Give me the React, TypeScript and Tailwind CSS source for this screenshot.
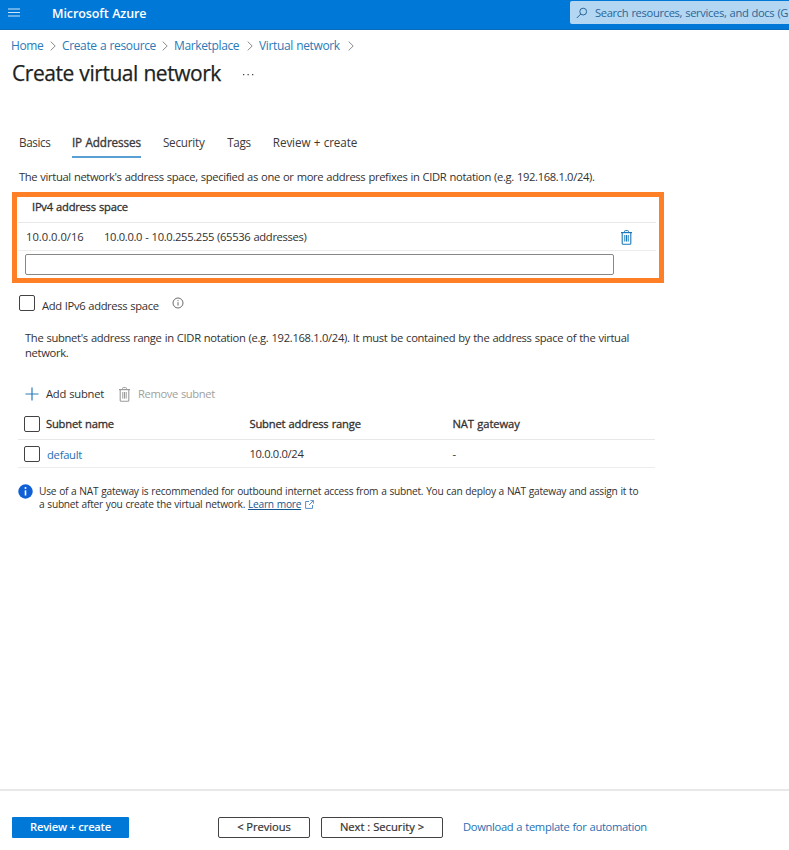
import React from 'react';
import clsx from 'clsx';

const breadcrumbs = [
  { label: 'Home', width: 'w-[51px]' },
  { label: 'Create a resource', width: 'w-[112px]' },
  { label: 'Marketplace', width: 'w-[85px]' },
  { label: 'Virtual network', width: 'w-[101px]' },
];

const tabs = [
  { label: 'Basics', margin: 'ml-[19px]', tracking: 'tracking-[-0.38px]' },
  { label: 'IP Addresses', margin: 'ml-[21.5px]', tracking: 'tracking-[-0.1px]' },
  { label: 'Security', margin: 'ml-[22px]', tracking: 'tracking-[-0.22px]' },
  { label: 'Tags', margin: 'ml-[22.5px]', tracking: 'tracking-[-0.28px]' },
  { label: 'Review + create', margin: 'ml-[22px]', tracking: 'tracking-[-0.12px]' },
];

const TrashIcon: React.FC<{ className?: string }> = ({ className }) => (
  <svg className={className} width="11" height="15" viewBox="0 0 11 15" fill="none" stroke="currentColor">
    <path d="M0 2.6h11" strokeWidth="1.2" />
    <path d="M3.5 2.4V1.5q0-.9.9-.9h2.2q.9 0 .9.9v.9" />
    <path d="M1.2 3v10.4q0 .9.9.9h6.8q.9 0 .9-.9V3" strokeWidth="1.1" />
    <path d="M3.8 5v6.6M5.5 5v6.6M7.2 5v6.6" strokeWidth="1" />
  </svg>
);

const Checkbox: React.FC = () => (
  <span className="block h-4 w-4 shrink-0 rounded-[2px] border border-[#424242] bg-white" />
);

const Header: React.FC = () => (
  <header className="flex h-[30px] w-full shrink-0 items-start overflow-hidden border-b border-[#0a6cbd] bg-[#0078d7] text-white">
    <svg className="mt-[8px] ml-[8px] shrink-0" width="12" height="10" viewBox="0 0 12 10" stroke="#cfe6f8">
      <path d="M0 1h12M0 4.5h12M0 8h12" strokeWidth="1.1" />
    </svg>
    <span className="mt-[5px] ml-[32px] w-[518px] shrink-0 text-[12.5px] leading-[17px] font-semibold tracking-[-0.1px] whitespace-nowrap">
      Microsoft Azure
    </span>
    <div className="mt-px flex h-[23px] w-[219px] shrink-0 items-center rounded-l-[2px] bg-[#b3d7f3] text-[#2b6595]">
      <svg className="ml-[6px] shrink-0" width="12" height="12" viewBox="0 0 12 12" fill="none" stroke="currentColor">
        <circle cx="7.2" cy="4.6" r="3.4" />
        <path d="M4.8 7 .8 11" />
      </svg>
      <span className="ml-[7px] text-[11.2px] leading-4 tracking-[-0.35px] whitespace-nowrap">
        Search resources, services, and docs (G
      </span>
    </div>
  </header>
);

const Breadcrumbs: React.FC = () => (
  <nav className="ml-[11px] flex h-[31px] items-center text-[12px] tracking-[-0.36px] text-[#2a7ab8]">
    {breadcrumbs.map((item) => (
      <span key={item.label} className={clsx('flex items-center justify-between whitespace-nowrap', item.width)}>
        {item.label}
        <svg className="mr-[6px]" width="6" height="10" viewBox="0 0 6 10" fill="none" stroke="#8a8a8a">
          <path d="M.7.6 5.2 5 .7 9.4" />
        </svg>
      </span>
    ))}
  </nav>
);

const Tabs: React.FC = () => (
  <div className="mt-[44px] flex h-[26px] text-[11.7px] leading-[21px] text-[#3b3a39]">
    {tabs.map((tab) => (
      <span
        key={tab.label}
        className={clsx(
          'whitespace-nowrap',
          tab.margin,
          tab.tracking,
          tab.label === 'IP Addresses' && 'border-b-2 border-[#5a9fd4] [-webkit-text-stroke:0.35px]'
        )}
      >
        {tab.label}
      </span>
    ))}
  </div>
);

const AddressSpace: React.FC = () => (
  <section className="mt-[8px] ml-[12px] h-[91px] w-[652px] border-5 border-[#ff7f27] pr-[3px] pl-px">
    <div className="flex h-[26px] items-center border-b border-[#e8e8e8] pb-[5px] pl-[14px] tracking-[-0.24px] [-webkit-text-stroke:0.3px]">
      IPv4 address space
    </div>
    <div className="flex h-[28px] items-center border-b border-[#ededed] pt-px pl-[8px]">
      <span className="w-[78px] pt-px">10.0.0.0/16</span>
      <span className="w-[517px] pt-px tracking-[-0.33px]">10.0.0.0 - 10.0.255.255 (65536 addresses)</span>
      <TrashIcon className="text-[#1a78b8]" />
    </div>
    <input className="mt-[3px] ml-[7px] block h-[21px] w-[589px] rounded-[2px] border border-[#8a8886] outline-none" />
  </section>
);

const Subnets: React.FC = () => (
  <section className="mt-[23px]">
    <div className="ml-[25px] flex h-[22px] items-center">
      <svg width="14" height="14" viewBox="0 0 14 14" stroke="#2a7ab8">
        <path d="M7 .5v13M.5 7h13" strokeWidth="1.2" />
      </svg>
      <span className="ml-[7px] w-[73px] pt-px tracking-[-0.24px]">Add subnet</span>
      <TrashIcon className="text-[#9a9a9a]" />
      <span className="ml-[8px] pt-px tracking-[-0.38px] text-[#a19f9d]">Remove subnet</span>
    </div>
    <div className="ml-[18px] w-[637px]">
      <div className="mt-[4px] flex h-[31px] items-center border-b border-[#e8e8e8] pl-[6px] [-webkit-text-stroke:0.3px]">
        <Checkbox />
        <span className="ml-[6px] w-[203.5px] tracking-[-0.2px]">Subnet name</span>
        <span className="w-[203px] tracking-[-0.2px]">Subnet address range</span>
        <span className="tracking-[-0.08px]">NAT gateway</span>
      </div>
      <div className="flex h-[28px] items-center border-b border-[#ededed] pl-[6px]">
        <Checkbox />
        <span className="ml-[7px] w-[202.5px] pt-[3px] tracking-[-0.25px] text-[#1f6fb2]">default</span>
        <span className="w-[203px] pt-[2px] tracking-[-0.34px]">10.0.0.0/24</span>
        <span className="pt-[2px]">-</span>
      </div>
    </div>
  </section>
);

const NatNotice: React.FC = () => (
  <div className="mt-[16px] ml-[18px] flex items-start text-[10.2px] leading-[13.5px] tracking-[-0.255px]">
    <svg className="shrink-0" width="15" height="15" viewBox="0 0 15 15">
      <circle cx="7.5" cy="7.5" r="7.2" fill="#0f5fd7" />
      <path d="M7.5 6.3v5.2" stroke="white" strokeWidth="1.6" />
      <circle cx="7.5" cy="4" r="1" fill="white" />
    </svg>
    <p className="mt-[0.5px] ml-[6px] whitespace-nowrap">
      Use of a NAT gateway is recommended for outbound internet access from a subnet. You can deploy a NAT gateway and assign it to
      <br />
      a subnet after you create the virtual network.{' '}
      <a className="text-[#17578f] underline">Learn more</a>
      <svg className="ml-[4px] inline-block align-[-1px]" width="9" height="9" viewBox="0 0 9 9" fill="none" stroke="#5b8fc4">
        <path d="M4 1.5H.6v6.9h6.9V5" />
        <path d="M5.4.6h3v3M8.4.6 4 5" />
      </svg>
    </p>
  </div>
);

const Footer: React.FC = () => (
  <footer className="mt-auto flex h-[61px] shrink-0 items-start border-t-2 border-[#e8e8e8] pt-[26px] pl-[12px] leading-[17px]">
    <button className="h-[21px] w-[117px] rounded-[1px] bg-[#0078d7] pb-[2px] font-semibold tracking-[-0.25px] text-white">
      Review + create
    </button>
    <button className="ml-[89px] h-[21px] w-[92px] rounded-[2px] border border-[#424242] pb-[3px] tracking-[-0.05px] [-webkit-text-stroke:0.2px]">
      &lt; Previous
    </button>
    <button className="ml-[11px] h-[21px] w-[122px] rounded-[2px] border border-[#424242] pb-[3px] [-webkit-text-stroke:0.2px]">
      Next : Security &gt;
    </button>
    <a className="ml-[20px] leading-[20px] tracking-[-0.34px] text-[#1f6fb2]">Download a template for automation</a>
  </footer>
);

export default function App() {
  return (
    <div className="flex h-[850px] w-[789px] flex-col overflow-hidden bg-white font-['Open_Sans','Noto_Sans',sans-serif] text-[11.2px] text-[#323130] [word-spacing:0.5px]">
      <Header />
      <Breadcrumbs />
      <div className="ml-[12px] flex h-[27px] items-center">
        <h1 className="w-[231px] pb-[2px] text-[21px] leading-[25px] tracking-[-0.45px] whitespace-nowrap text-[#201f1e] [-webkit-text-stroke:0.25px]">
          Create virtual network
        </h1>
        <svg width="11" height="2" viewBox="0 0 11 2" fill="#444">
          <path d="M0 0h1.3v1.3H0zM4.5 0h1.3v1.3H4.5zM9 0h1.3v1.3H9z" />
        </svg>
      </div>
      <Tabs />
      <p className="mt-[11px] ml-[19px] leading-[15px] tracking-[-0.34px] whitespace-nowrap">
        The virtual network's address space, specified as one or more address prefixes in CIDR notation (e.g. 192.168.1.0/24).
      </p>
      <AddressSpace />
      <div className="mt-[12px] ml-[19px] flex h-[20px] items-start">
        <Checkbox />
        <span className="mt-[3px] ml-[7px] w-[130px] leading-4 tracking-[-0.35px]">Add IPv6 address space</span>
        <svg className="mt-[2px]" width="12" height="12" viewBox="0 0 12 12" fill="none" stroke="#6b6b6b">
          <circle cx="6" cy="6" r="5" />
          <path d="M6 5.2v3.4M6 3.2v1" />
        </svg>
      </div>
      <p className="mt-[15px] ml-[25px] leading-[15px] tracking-[-0.32px] whitespace-nowrap">
        The subnet's address range in CIDR notation (e.g. 192.168.1.0/24). It must be contained by the address space of the virtual
        <br />
        network.
      </p>
      <Subnets />
      <NatNotice />
      <Footer />
    </div>
  );
}
